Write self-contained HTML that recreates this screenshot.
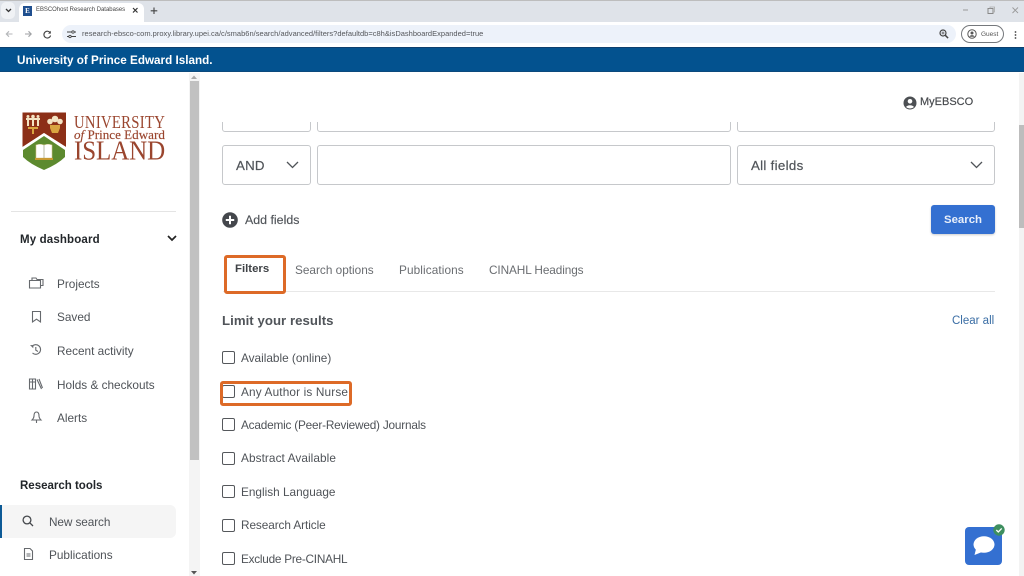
<!DOCTYPE html>
<html><head><meta charset="utf-8"><title>EBSCOhost Research Databases</title>
<style>
html,body{margin:0;padding:0;width:1024px;height:576px;overflow:hidden;background:#fff}
body{position:relative;font-family:"Liberation Sans",sans-serif;color:#4f5358}
.t{position:absolute;white-space:nowrap;font-size:12px;line-height:16px}
.b{position:absolute;box-sizing:border-box}
.in{border:1px solid #c6c8cb;border-radius:3px;background:#fff}
.cb{position:absolute;left:222px;width:13px;height:13px;box-sizing:border-box;border:1.8px solid #55585c;border-radius:2px;background:#fff}
.l{left:241px;font-size:11.8px}
.n{left:57px;font-size:11.8px}
svg{position:absolute;overflow:visible}
.s{fill:none;stroke:#66696d;stroke-width:1.1}
.sf{font:15px/16px "Liberation Serif",serif;color:#9a452e;transform-origin:0 50%}
</style></head><body>
<!-- browser chrome -->
<div class="b" style="left:0;top:0;width:1024px;height:22px;background:#dfe3e9;border-top:1px solid #bdbdbd"></div>
<div class="b" style="left:1px;top:2px;width:14px;height:17px;background:#f0f2f5;border-radius:5px"></div>
<svg style="left:5px;top:8px" width="7" height="5"><path d="M1 1l2.500 2.500L6 1" fill="none" stroke="#333" stroke-width="1.300"/></svg>
<div class="b" style="left:19px;top:3px;width:125px;height:20px;background:#fff;border-radius:6px 6px 0 0"></div>
<div class="b" style="left:23px;top:6px;width:9px;height:10px;background:#1f4f8f;color:#fff;font:bold 7px/10px 'Liberation Serif',serif;text-align:center">E</div>
<div class="t" style="left:36px;top:4px;font-size:5.950px;line-height:13px;color:#444">EBSCOhost Research Databases</div>
<svg style="left:132px;top:7px" width="7" height="7"><path d="M1 1l4.500 4.500M5.500 1L1 5.500" stroke="#333" stroke-width="1.200"/></svg>
<svg style="left:150px;top:7px" width="8" height="8"><path d="M4 .5v6.500M.7 3.800h6.600" stroke="#444" stroke-width="1.100"/></svg>
<svg style="left:963px;top:6px" width="56" height="10"><path d="M0 4h5" stroke="#999"/><rect x="25" y="2.500" width="5" height="5" fill="none" stroke="#888"/><path d="M27 2.500V1h4.500v5H30" fill="none" stroke="#aaa" stroke-width=".8"/><path d="M49.500 1.500l5.500 5.500M55 1.500L49.500 7" stroke="#999" stroke-width=".9"/></svg>
<div class="b" style="left:0;top:22px;width:1024px;height:25px;background:#fff"></div>
<svg style="left:5px;top:30px" width="30" height="9"><path d="M7.500 4H1.500M4 1.300 1.300 4 4 6.700" fill="none" stroke="#b4b6b9" stroke-width="1.100"/><path d="M20 4h6M23.500 1.300 26.200 4l-2.700 2.700" fill="none" stroke="#a0a2a5" stroke-width="1.100"/></svg>
<svg style="left:43px;top:30px" width="9" height="9"><path d="M7.300 3A3.400 3.400 0 1 0 7.600 5.500" fill="none" stroke="#444" stroke-width="1.100"/><path d="M7.800 .8v2.800H5z" fill="#444"/></svg>
<div class="b" style="left:62px;top:25px;width:894px;height:18px;background:#edf2fa;border-radius:9px"></div>
<svg style="left:67px;top:30px" width="9" height="9"><path d="M0 2h5M7 2h2M0 6.500h2M4 6.500h5" stroke="#444" stroke-width="1"/><circle cx="6" cy="2" r="1.200" fill="none" stroke="#444" stroke-width=".8"/><circle cx="3" cy="6.500" r="1.200" fill="none" stroke="#444" stroke-width=".8"/></svg>
<div class="t" style="left:82px;top:28px;font-size:7.490px;line-height:12px;color:#55575b;letter-spacing:.02px">research-ebsco-com.proxy.library.upei.ca/c/smab6n/search/advanced/filters?defaultdb=c8h&amp;isDashboardExpanded=true</div>
<svg style="left:939px;top:29px" width="10" height="10"><circle cx="4" cy="4" r="3" fill="none" stroke="#444" stroke-width="1.200"/><path d="M6.300 6.300l2.800 2.800" stroke="#444" stroke-width="1.500"/><path d="M2.500 4h3M4 2.500v3" stroke="#444" stroke-width=".7"/></svg>
<div class="b" style="left:961px;top:25px;width:43px;height:18px;border:1px solid #75787c;border-radius:9px;background:#fff"></div>
<svg style="left:967px;top:29px" width="10" height="10"><circle cx="5" cy="5" r="4.200" fill="none" stroke="#555" stroke-width="1"/><circle cx="5" cy="4" r="1.500" fill="#555"/><path d="M2.300 7.800a3 3 0 0 1 5.400 0" fill="#555"/></svg>
<div class="t" style="left:981px;top:29px;font-size:6.500px;line-height:12px;color:#555">Guest</div>
<svg style="left:1014px;top:31px" width="3" height="9"><circle cx="1.500" cy="1" r=".9" fill="#444"/><circle cx="1.500" cy="4" r=".9" fill="#444"/><circle cx="1.500" cy="7" r=".9" fill="#444"/></svg>
<!-- blue band -->
<div class="b" style="left:0;top:47px;width:1024px;height:25px;background:#03528f;border-top:1px solid #0c3f6e;border-bottom:1px solid #0c4a7c"></div>
<div class="t" style="left:17px;top:53px;font-weight:bold;font-size:11.700px;color:#fff">University of Prince Edward Island.</div>
<!-- sidebar scrollbar -->
<div class="b" style="left:189px;top:73px;width:11px;height:503px;background:#f4f4f4"></div>
<div class="b" style="left:190px;top:81px;width:9px;height:379px;background:#c1c1c1"></div>
<svg style="left:191px;top:75px" width="6" height="4"><path d="M3 .5L6 4H0z" fill="#a8a8a8"/></svg>
<svg style="left:191px;top:571px" width="6" height="4"><path d="M3 3.500L6 0H0z" fill="#555"/></svg>
<!-- logo -->
<svg style="left:22px;top:112px" width="46" height="60" viewBox="0 0 46 60">
<path d="M.5 .5H44V35L22 21 .5 35z" fill="#8c2f17"/>
<path d="M.5 35L22 21 44 35V46L22 59 .5 46z" fill="#fff"/>
<path d="M1 38L22 24 43 38V45Q36 52 22 58Q8 52 1 45z" fill="#5d8a2f"/>
<path d="M14 33q4-1.500 8 0q4-1.500 8 0V46H14z" fill="#fff" stroke="#d8c98a" stroke-width=".6"/>
<path d="M13 46h18v2H13z" fill="#c99a32"/>
<path d="M22 33v13" stroke="#9a9a7a" stroke-width=".7"/>
<path d="M4 6h14v2H4zM5 8h2v6H5zM10 8h2v6h-2zM15 8h2v6h-2z" fill="#f3e3c3"/>
<circle cx="11" cy="4.500" r="1.800" fill="#f3e3c3"/><circle cx="6" cy="4.500" r="1.500" fill="#f3e3c3"/><circle cx="16" cy="4.500" r="1.500" fill="#f3e3c3"/>
<path d="M6 15h10v2H6zM10 17h2v5h-2z" fill="#d9a441"/>
<circle cx="33" cy="7" r="3.300" fill="#f3e3c3"/><circle cx="28" cy="9.500" r="2.800" fill="#f3e3c3"/><circle cx="38" cy="9.500" r="2.800" fill="#f3e3c3"/>
<path d="M28 13h10v3l-2 5h-6l-2-5z" fill="#d9a441"/>
</svg>
<div class="t sf" style="left:74px;top:115px;font-size:14.700px;letter-spacing:.3px;transform:scaleY(1.200)">UNIVERSITY</div>
<div class="t sf" style="left:74px;top:128px;font-size:13.100px;line-height:14px;-webkit-text-stroke:.15px #9a452e"><i>of</i> Prince Edward</div>
<div class="t sf" style="left:74px;top:139px;font-size:25px;line-height:26px;letter-spacing:-.1px;transform:scaleY(1.100)">ISLAND</div>
<div class="b" style="left:11px;top:211px;width:165px;height:1px;background:#e4e4e4"></div>
<div class="t" style="left:20px;top:232px;font-weight:bold;font-size:11.500px;color:#22262a;letter-spacing:.15px">My dashboard</div>
<svg style="left:167px;top:235px" width="10" height="7"><path d="M1 1l4 4 4-4" fill="none" stroke="#222" stroke-width="1.700"/></svg>
<svg style="left:29px;top:277px" width="15" height="12"><path class="s" d="M3 3V1h4l1 1.500h6V8.500H12M.5 3.500h11V11H.5z"/></svg>
<div class="t n" style="top:276px">Projects</div>
<svg style="left:32px;top:311px" width="9" height="12"><path class="s" d="M.5 .5h8V11L4.500 8.200.5 11z"/></svg>
<div class="t n" style="top:309px">Saved</div>
<svg style="left:30px;top:344px" width="12" height="12"><path class="s" d="M2 2.500A4.800 4.800 0 1 1 2.500 9M5.800 3v3.200L8 7.500"/><path d="M0 1l3.500.3-.3 3z" fill="#66696d"/></svg>
<div class="t n" style="top:343px">Recent activity</div>
<svg style="left:29px;top:378px" width="14" height="12"><path class="s" d="M.5 1h3v10h-3zM3.500 1h3v10h-3zM.5 4h6M8 1.500l4.500 9.500M10 1l3.500 9"/></svg>
<div class="t n" style="top:377px">Holds &amp; checkouts</div>
<svg style="left:31px;top:411px" width="11" height="13"><path class="s" d="M5.500 1C3.500 1 3 3 3 5c0 2-1 3-2 4h9C9 8 8 7 8 5s-.5-4-2.500-4zM5.500 9v3"/></svg>
<div class="t n" style="top:410px">Alerts</div>
<div class="t" style="left:20px;top:478px;font-weight:bold;font-size:11.500px;color:#22262a">Research tools</div>
<div class="b" style="left:0;top:505px;width:176px;height:33px;background:#f5f5f5;border-radius:0 6px 6px 0"></div>
<div class="b" style="left:0;top:505px;width:2px;height:33px;background:#0d5a96"></div>
<svg style="left:22px;top:515px" width="12" height="12"><circle cx="5" cy="5" r="3.900" fill="none" stroke="#44474b" stroke-width="1.300"/><path d="M7.800 7.800L11 11" stroke="#44474b" stroke-width="1.300"/></svg>
<div class="t" style="left:49px;top:514px;font-size:11.800px;letter-spacing:-.1px">New search</div>
<svg style="left:24px;top:548px" width="9" height="12"><path class="s" d="M.5 .5h5.500L8.500 3v8.500h-8zM2.500 6h4M2.500 8h4"/></svg>
<div class="t" style="left:49px;top:547px;font-size:11.800px">Publications</div>
<!-- form -->
<div class="b in" style="left:222px;top:100px;width:89px;height:32px"></div>
<div class="b in" style="left:317px;top:100px;width:414px;height:32px"></div>
<div class="b in" style="left:737px;top:100px;width:258px;height:32px"></div>
<div class="b" style="left:210px;top:80px;width:800px;height:42px;background:#fff"></div>
<!-- header right -->
<svg style="left:903px;top:96px" width="14" height="14"><circle cx="7" cy="7" r="6.500" fill="#4c4f53"/><circle cx="7" cy="5.300" r="2.300" fill="#fff"/><path d="M3 11a4.500 3.300 0 0 1 8 0a6 6 0 0 1-8 0z" fill="#fff"/></svg>
<div class="t" style="left:920px;top:94px;font-size:11px;color:#44474b;-webkit-text-stroke:.15px #44474b">MyEBSCO</div>
<div class="b in" style="left:222px;top:145px;width:89px;height:40px"></div>
<div class="t" style="left:236px;top:158px;font-size:13.300px;color:#505459;letter-spacing:.2px;-webkit-text-stroke:.2px #505459">AND</div>
<svg style="left:286px;top:161px" width="13" height="8"><path d="M1 1l5.500 5.500L12 1" fill="none" stroke="#505459" stroke-width="1.300"/></svg>
<div class="b in" style="left:317px;top:145px;width:414px;height:40px"></div>
<div class="b in" style="left:737px;top:145px;width:258px;height:40px"></div>
<div class="t" style="left:751px;top:158px;font-size:13.300px;color:#505459;letter-spacing:.3px;-webkit-text-stroke:.2px #505459">All fields</div>
<svg style="left:970px;top:161px" width="13" height="8"><path d="M1 1l5.500 5.500L12 1" fill="none" stroke="#505459" stroke-width="1.300"/></svg>
<svg style="left:222px;top:212px" width="16" height="16"><circle cx="8" cy="8" r="7.800" fill="#44474c"/><path d="M8 3.800v8.400M3.800 8h8.400" stroke="#fff" stroke-width="2"/></svg>
<div class="t" style="left:245px;top:212px;font-size:12.400px;color:#505459;-webkit-text-stroke:.15px #505459">Add fields</div>
<div class="b" style="left:931px;top:205px;width:64px;height:29px;background:#3470d1;border-radius:3px;box-shadow:0 1px 2px rgba(0,0,0,.2)"></div>
<div class="t" style="left:944px;top:212px;font-size:11.400px;font-weight:bold;color:#e9effa">Search</div>
<!-- tabs -->
<div class="b" style="left:223px;top:291px;width:772px;height:1px;background:#e8e8e8"></div>
<div class="t" style="left:235px;top:261px;font-weight:bold;font-size:11.400px;color:#3f4246">Filters</div>
<div class="b" style="left:224px;top:255px;width:62px;height:39px;border:3px solid #dd6a27;border-radius:3px"></div>
<div class="t" style="left:295px;top:262px;font-size:11.800px;color:#6a6d71">Search options</div>
<div class="t" style="left:399px;top:262px;font-size:11.800px;color:#6a6d71;letter-spacing:.1px">Publications</div>
<div class="t" style="left:489px;top:262px;font-size:11.800px;color:#6a6d71;letter-spacing:-.1px">CINAHL Headings</div>
<div class="t" style="left:222px;top:313px;font-weight:bold;font-size:13.200px;color:#505459;letter-spacing:.05px">Limit your results</div>
<div class="t" style="left:952px;top:313px;font-size:11.500px;color:#3b6ea5">Clear all</div>
<!-- checkboxes -->
<div class="cb" style="top:351px"></div><div class="t l" style="top:350px">Available (online)</div>
<div class="cb" style="top:385px"></div><div class="t l" style="top:384px;letter-spacing:.15px">Any Author is Nurse</div>
<div class="b" style="left:220px;top:381px;width:132px;height:25px;border:3px solid #dd6a27;border-radius:3px"></div>
<div class="cb" style="top:418px"></div><div class="t l" style="top:417px;letter-spacing:-.2px">Academic (Peer-Reviewed) Journals</div>
<div class="cb" style="top:452px"></div><div class="t l" style="top:450px;letter-spacing:.08px">Abstract Available</div>
<div class="cb" style="top:485px"></div><div class="t l" style="top:484px">English Language</div>
<div class="cb" style="top:519px"></div><div class="t l" style="top:517px;letter-spacing:-.08px">Research Article</div>
<div class="cb" style="top:552px"></div><div class="t l" style="top:551px;letter-spacing:-.25px">Exclude Pre-CINAHL</div>
<!-- right scrollbar -->
<div class="b" style="left:1019px;top:73px;width:5px;height:503px;background:#f3f3f3"></div>
<div class="b" style="left:1019px;top:125px;width:5px;height:103px;background:#bdbdbd"></div>
<!-- chat -->
<div class="b" style="left:965px;top:527px;width:37px;height:38px;background:#3470d1;border-radius:4px"></div>
<svg style="left:972px;top:535px" width="24" height="21"><ellipse cx="12" cy="9.500" rx="10.500" ry="8.300" fill="#fff"/><path d="M4 14L2.500 20 10 17z" fill="#fff"/></svg>
<svg style="left:993px;top:524px" width="12" height="12"><circle cx="6" cy="6" r="5.700" fill="#3e8f5f"/><path d="M3.300 6l2 2 3.400-3.600" fill="none" stroke="#fff" stroke-width="1.300"/></svg>
</body></html>
